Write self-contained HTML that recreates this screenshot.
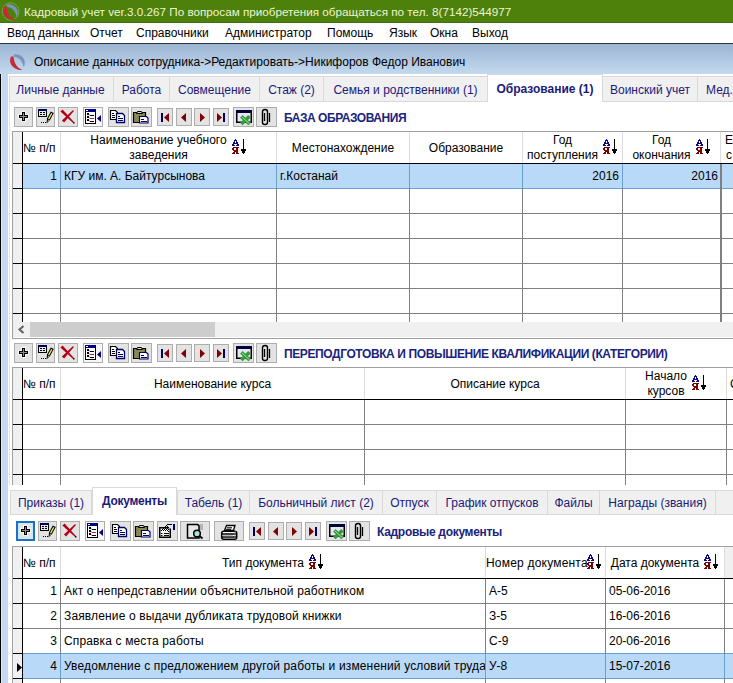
<!DOCTYPE html><html><head><meta charset="utf-8"><style>
*{margin:0;padding:0;box-sizing:border-box}
html,body{width:733px;height:683px;overflow:hidden;background:#fff}
body{position:relative;font-family:"Liberation Sans", sans-serif;font-size:12px;color:#000}
div,svg{position:absolute}
.t{white-space:nowrap;line-height:14px}
.b{background:#e3e3e3;border:1px solid #adadad;box-sizing:content-box}
.tab{position:absolute;background:#f0f0f0;border:1px solid #d9d9d9;border-bottom:none;color:#1a1a7a;text-align:center;line-height:14px;white-space:nowrap}
.tab.a{background:#fff;font-weight:bold;}
</style></head><body>
<div style="left:0px;top:0px;width:733px;height:23px;background:#4d810c"></div>
<div style="left:0px;top:22px;width:733px;height:1px;background:#45700f"></div>
<svg style="left:1px;top:2px" width="19" height="19"><ellipse cx="9.5" cy="9.5" rx="8.3" ry="8.6" fill="none" stroke="#e0ecd0" stroke-width="0.8" stroke-dasharray="1 1.2" opacity="0.8"/></svg>
<svg style="left:2px;top:3px" width="17" height="17"><path d="M2 3.5 C-1.5 10 5 18 13.5 17 C8 15 5 10 4.5 3.5 Z" fill="#c8283a"/><path d="M4.5 1.5 C12 0 18 6 15 14 C13.5 13 14 5 5 3.8 Z" fill="#7895c0"/></svg>
<div class="t" style="left:24px;top:5px;color:#eef5d0;font-size:11.7px">Кадровый учет ver.3.0.267 По вопросам приобретения обращаться по тел. 8(7142)544977</div>
<div style="left:0px;top:23px;width:733px;height:20px;background:#fff"></div>
<div class="t" style="left:7px;top:26px;font-size:12px;color:#000">Ввод данных</div>
<div class="t" style="left:90px;top:26px;font-size:12px;color:#000">Отчет</div>
<div class="t" style="left:136px;top:26px;font-size:12px;color:#000">Справочники</div>
<div class="t" style="left:225px;top:26px;font-size:12px;color:#000">Администратор</div>
<div class="t" style="left:327px;top:26px;font-size:12px;color:#000">Помощь</div>
<div class="t" style="left:389px;top:26px;font-size:12px;color:#000">Язык</div>
<div class="t" style="left:430px;top:26px;font-size:12px;color:#000">Окна</div>
<div class="t" style="left:472px;top:26px;font-size:12px;color:#000">Выход</div>
<div style="left:0px;top:43px;width:733px;height:1px;background:#2c3440"></div>
<div style="left:0px;top:44px;width:733px;height:640px;background:linear-gradient(#9cb5d2,#c3d9ef 30px,#c3d9ef)"></div>
<svg style="left:9px;top:53px" width="17" height="17"><path d="M2 3.5 C-1.5 10 5 18 13.5 17 C8 15 5 10 4.5 3.5 Z" fill="#c8283a"/><path d="M4.5 1.5 C12 0 18 6 15 14 C13.5 13 14 5 5 3.8 Z" fill="#7895c0"/></svg>
<div class="t" style="left:34px;top:55px;color:#000">Описание данных сотрудника-&gt;Редактировать-&gt;Никифоров Федор Иванович</div>
<div style="left:0px;top:74px;width:1px;height:610px;background:#000"></div>
<div style="left:1px;top:74px;width:1px;height:610px;background:#dde8f2"></div>
<div style="left:8px;top:74px;width:725px;height:610px;background:#fff"></div>
<div style="left:9px;top:101px;width:724px;height:583px;background:#fff;border-left:1px solid #e3e3e3"></div>
<div class="tab" style="left:9px;top:76px;width:105px;height:25px;padding-top:6px;padding-right:2px">Личные данные</div>
<div class="tab" style="left:113px;top:76px;width:57px;height:25px;padding-top:6px;padding-right:0px">Работа</div>
<div class="tab" style="left:169px;top:76px;width:91px;height:25px;padding-top:6px;padding-right:0px">Совмещение</div>
<div class="tab" style="left:259px;top:76px;width:65px;height:25px;padding-top:6px;padding-right:0px">Стаж (2)</div>
<div class="tab" style="left:323px;top:76px;width:165px;height:25px;padding-top:6px;padding-right:0px">Семья и родственники (1)</div>
<div class="tab" style="left:602px;top:76px;width:96px;height:25px;padding-top:6px;padding-right:0px">Воинский учет</div>
<div class="tab" style="left:697px;top:76px;width:60px;height:25px;padding-top:6px;text-align:left;padding-left:8px">Мед.карта</div>
<div class="tab a" style="left:487px;top:74px;width:116px;height:28px;padding-top:7px;border-color:#d9d9d9">Образование (1)</div>
<div style="left:9px;top:101px;width:478px;height:1px;background:#d9d9d9"></div>
<div style="left:603px;top:101px;width:130px;height:1px;background:#d9d9d9"></div>
<div class="b" style="left:14px;top:107px;width:17px;height:18px;"><svg width="19" height="20" style="left:-1px;top:-1px"><path d="M8 5h3v3h3v3h-3v3h-3v-3h-3v-3h3z" fill="#fff" stroke="#fff" stroke-width="2" opacity="0.7"/><path d="M8 5h3v3h3v3h-3v3h-3v-3h-3v-3h3z" fill="#000"/><rect x="9" y="6" width="1" height="7" fill="#8a8a8a"/><rect x="6" y="9" width="7" height="1" fill="#8a8a8a"/></svg></div>
<div class="b" style="left:36px;top:107px;width:17px;height:18px;"><svg width="19" height="20" style="left:-1px;top:-1px"><rect x="2" y="2" width="9" height="8" fill="#000"/><rect x="2" y="2" width="9" height="2" fill="#00005a"/><rect x="3" y="4" width="7" height="5" fill="#e8e8f0"/><rect x="4" y="5" width="2" height="1" fill="#000"/><rect x="7" y="5" width="2" height="1" fill="#000"/><rect x="4" y="7" width="2" height="1" fill="#000"/><rect x="7" y="7" width="2" height="1" fill="#000"/><path d="M10.5 16.5 L11 11.5 L14.8 4.5 L17.8 6 L14 13 Z" fill="#000"/><path d="M12 11.8 L15.2 6 L16.4 6.6 L13.2 12.4 Z" fill="#e8e860"/><path d="M11.6 15 L12 12.8 L13 13.3Z" fill="#e8e860"/><rect x="5" y="15" width="1" height="1" fill="#000"/><rect x="7" y="15" width="1" height="1" fill="#000"/><rect x="9" y="15" width="1" height="1" fill="#000"/></svg></div>
<div class="b" style="left:58px;top:107px;width:18px;height:18px;"><svg width="20" height="20" style="left:-1px;top:-1px"><path d="M4.6 2.4 L2.4 4.6 L15.1 15.9 L15.9 15.1 Z" fill="#b40016"/><path d="M15.9 3.9 L15.1 3.1 L3.9 13.4 L6.1 15.6 Z" fill="#b40016"/><rect x="15" y="15" width="1.5" height="1.5" fill="#300"/></svg></div>
<div class="b" style="left:83px;top:107px;width:18px;height:18px;background:#f6f6f6"><svg width="20" height="20" style="left:-1px;top:-1px"><rect x="2" y="2" width="11" height="15" fill="#000"/><rect x="3" y="5" width="9" height="11" fill="#fff"/><rect x="2" y="2" width="11" height="3" fill="#000080"/><rect x="3" y="3" width="2" height="1" fill="#fff"/><rect x="4" y="6" width="2" height="2" fill="#000"/><rect x="4" y="9" width="2" height="2" fill="#000"/><rect x="4" y="12" width="2" height="2" fill="#000"/><path d="M6 7.5l1 1h4M6 10.5l1 1h4M6 13.5l1 1h4" stroke="#000" fill="none"/><path d="M7 11.5h4" stroke="#c02040"/><path d="M18 8v7l-4-3.5z" fill="#000080"/></svg></div>
<div class="b" style="left:108px;top:107px;width:19px;height:18px;"><svg width="21" height="20" style="left:-1px;top:-1px"><path d="M2.5 3.5h5l2 2v7h-7z" fill="#fff" stroke="#000" stroke-width="1.2"/><path d="M4 6.5h2M4 8.5h3M4 10.5h3" stroke="#000"/><path d="M8.5 6.5h6l2 2v7h-8z" fill="#fff" stroke="#000060" stroke-width="1.3"/><path d="M10 9.5h2M10 11.5h5M10 13.5h5" stroke="#000060"/></svg></div>
<div class="b" style="left:131px;top:107px;width:19px;height:18px;"><svg width="21" height="20" style="left:-1px;top:-1px"><path d="M2.5 5.5h12v10h-12z" fill="#8a8a50" stroke="#000" stroke-width="1.2"/><path d="M5.5 6.5h6l-1-2h-4z" fill="#e0e0a0" stroke="#000"/><path d="M8.5 9.5h7l1.5 1.5v5h-8.5z" fill="#fff" stroke="#000060" stroke-width="1.2"/><path d="M10 12.5h3M10 14.5h6" stroke="#000060"/></svg></div>
<div class="b" style="left:157px;top:108px;width:14px;height:16px;"><svg width="16" height="18" style="left:-1px;top:-1px"><rect x="4" y="5" width="2" height="9" fill="#000060"/><path d="M12 5v9l-5-4.5z" fill="#800000"/></svg></div>
<div class="b" style="left:176px;top:108px;width:14px;height:16px;"><svg width="16" height="18" style="left:-1px;top:-1px"><path d="M10 5v9l-5-4.5z" fill="#800000"/></svg></div>
<div class="b" style="left:194px;top:108px;width:14px;height:16px;"><svg width="16" height="18" style="left:-1px;top:-1px"><path d="M6 5v9l5-4.5z" fill="#800000"/></svg></div>
<div class="b" style="left:213px;top:108px;width:14px;height:16px;"><svg width="16" height="18" style="left:-1px;top:-1px"><path d="M4 5v9l5-4.5z" fill="#800000"/><rect x="10" y="5" width="2" height="9" fill="#000060"/></svg></div>
<div class="b" style="left:233px;top:107px;width:19px;height:18px;"><svg width="21" height="20" style="left:-1px;top:-1px"><rect x="3" y="3" width="16" height="13" fill="#000"/><rect x="4.5" y="6" width="13" height="8.5" fill="#e6e6f6"/><rect x="3" y="3" width="16" height="3" fill="#00003a"/><path d="M8.3 9.3 L16.7 17" stroke="#359a3a" stroke-width="3.6"/><path d="M16.5 9.3 L8.3 17" stroke="#359a3a" stroke-width="3.6"/><path d="M8.8 9.8 L16.2 16.5" stroke="#a8eea8" stroke-width="0.9"/></svg></div>
<div class="b" style="left:256px;top:107px;width:19px;height:18px;"><svg width="21" height="20" style="left:-1px;top:-1px"><path d="M8.5 14 V6 M13.5 6 V15" stroke="#000" stroke-width="1.3" fill="none"/><path d="M6.5 5 Q6.5 2.5 9.2 2.5 Q11.5 2.5 11.5 5 V15.5 Q11.5 17.5 9 17.5 Q6.5 17.5 6.5 15.5 Z" fill="none" stroke="#000" stroke-width="1.4"/></svg></div>
<div class="t" style="left:284px;top:111px;font-weight:bold;color:#1a237e;letter-spacing:-0.45px">БАЗА ОБРАЗОВАНИЯ</div>
<div style="left:12px;top:131px;width:721px;height:191px;overflow:hidden;background:#fff">
<div style="left:0px;top:0px;width:721px;height:1px;background:#a0a0a0"></div>
<div style="left:0px;top:0px;width:1px;height:191px;background:#a0a0a0"></div>
<div style="left:1px;top:1px;width:9px;height:191px;background:#f0f0f0"></div>
<div style="left:11px;top:33px;width:710px;height:24px;background:#b9d9f9"></div>
<div style="left:11px;top:32px;width:710px;height:1px;background:#6a9fd6"></div>
<div style="left:11px;top:57px;width:710px;height:1px;background:#6a9fd6"></div>
<div style="left:1px;top:57px;width:10px;height:1px;background:#000"></div>
<div style="left:11px;top:82px;width:710px;height:1px;background:#808080"></div>
<div style="left:1px;top:82px;width:10px;height:1px;background:#000"></div>
<div style="left:11px;top:107px;width:710px;height:1px;background:#808080"></div>
<div style="left:1px;top:107px;width:10px;height:1px;background:#000"></div>
<div style="left:11px;top:132px;width:710px;height:1px;background:#808080"></div>
<div style="left:1px;top:132px;width:10px;height:1px;background:#000"></div>
<div style="left:11px;top:157px;width:710px;height:1px;background:#808080"></div>
<div style="left:1px;top:157px;width:10px;height:1px;background:#000"></div>
<div style="left:11px;top:182px;width:710px;height:1px;background:#808080"></div>
<div style="left:1px;top:182px;width:10px;height:1px;background:#000"></div>
<div style="left:1px;top:32px;width:720px;height:1px;background:#000"></div>
<div style="left:10px;top:1px;width:1px;height:191px;background:#000"></div>
<div style="left:48px;top:1px;width:1px;height:31px;background:#dcdcdc"></div>
<div style="left:48px;top:33px;width:1px;height:159px;background:#808080"></div>
<div style="left:264px;top:1px;width:1px;height:31px;background:#dcdcdc"></div>
<div style="left:264px;top:33px;width:1px;height:159px;background:#808080"></div>
<div style="left:397px;top:1px;width:1px;height:31px;background:#dcdcdc"></div>
<div style="left:397px;top:33px;width:1px;height:159px;background:#808080"></div>
<div style="left:510px;top:1px;width:1px;height:31px;background:#dcdcdc"></div>
<div style="left:510px;top:33px;width:1px;height:159px;background:#808080"></div>
<div style="left:610px;top:1px;width:1px;height:31px;background:#dcdcdc"></div>
<div style="left:610px;top:33px;width:1px;height:159px;background:#808080"></div>
<div style="left:708px;top:1px;width:1px;height:31px;background:#dcdcdc"></div>
<div style="left:708px;top:33px;width:2px;height:159px;background:#808080"></div>
<div style="left:48px;top:33px;width:1px;height:24px;background:#6a9fd6"></div>
<div style="left:264px;top:33px;width:1px;height:24px;background:#6a9fd6"></div>
<div style="left:397px;top:33px;width:1px;height:24px;background:#6a9fd6"></div>
<div style="left:510px;top:33px;width:1px;height:24px;background:#6a9fd6"></div>
<div style="left:610px;top:33px;width:1px;height:24px;background:#6a9fd6"></div>
<div style="left:708px;top:33px;width:2px;height:25px;background:#808080"></div>
<div style="left:11px;top:1px;width:37px;height:31px;display:flex;align-items:center;justify-content:center;padding-top:2px;justify-content:flex-start;padding-left:0"><div class="t" style="position:relative;text-align:center;line-height:15px">№ п/п</div></div>
<div style="left:49px;top:1px;width:215px;height:31px;display:flex;align-items:center;justify-content:center;"><div class="t" style="position:relative;text-align:center;line-height:15px">Наименование учебного<br>заведения</div><svg width="15" height="16" style="position:relative;flex:none;margin-left:5px;top:-1px" shape-rendering="crispEdges"><rect x="3" y="0" width="1" height="1" fill="#0a0a80"/><rect x="2" y="1" width="3" height="1" fill="#0a0a80"/><rect x="2" y="2" width="1" height="1" fill="#0a0a80"/><rect x="4" y="2" width="1" height="1" fill="#0a0a80"/><rect x="1" y="3" width="2" height="1" fill="#0a0a80"/><rect x="4" y="3" width="2" height="1" fill="#0a0a80"/><rect x="1" y="4" width="5" height="1" fill="#0a0a80"/><rect x="0" y="5" width="2" height="1" fill="#0a0a80"/><rect x="5" y="5" width="2" height="1" fill="#0a0a80"/><rect x="0" y="6" width="3" height="1" fill="#0a0a80"/><rect x="4" y="6" width="3" height="1" fill="#0a0a80"/><rect x="1" y="8" width="6" height="1" fill="#7a0000"/><rect x="0" y="9" width="2" height="1" fill="#7a0000"/><rect x="4" y="9" width="2" height="1" fill="#7a0000"/><rect x="0" y="10" width="2" height="1" fill="#7a0000"/><rect x="4" y="10" width="2" height="1" fill="#7a0000"/><rect x="1" y="11" width="5" height="1" fill="#7a0000"/><rect x="2" y="12" width="4" height="1" fill="#7a0000"/><rect x="1" y="13" width="2" height="1" fill="#7a0000"/><rect x="4" y="13" width="2" height="1" fill="#7a0000"/><rect x="0" y="14" width="3" height="1" fill="#7a0000"/><rect x="4" y="14" width="3" height="1" fill="#7a0000"/><rect x="11" y="0" width="1" height="15" fill="#000"/><rect x="9" y="10" width="5" height="2" fill="#000"/><rect x="10" y="12" width="3" height="2" fill="#000"/></svg></div>
<div style="left:265px;top:1px;width:132px;height:31px;display:flex;align-items:center;justify-content:center;padding-top:2px;"><div class="t" style="position:relative;text-align:center;line-height:15px">Местонахождение</div></div>
<div style="left:398px;top:1px;width:112px;height:31px;display:flex;align-items:center;justify-content:center;padding-top:2px;"><div class="t" style="position:relative;text-align:center;line-height:15px">Образование</div></div>
<div style="left:511px;top:1px;width:99px;height:31px;display:flex;align-items:center;justify-content:center;"><div class="t" style="position:relative;text-align:center;line-height:15px">Год<br>поступления</div><svg width="15" height="16" style="position:relative;flex:none;margin-left:5px;top:-1px" shape-rendering="crispEdges"><rect x="3" y="0" width="1" height="1" fill="#0a0a80"/><rect x="2" y="1" width="3" height="1" fill="#0a0a80"/><rect x="2" y="2" width="1" height="1" fill="#0a0a80"/><rect x="4" y="2" width="1" height="1" fill="#0a0a80"/><rect x="1" y="3" width="2" height="1" fill="#0a0a80"/><rect x="4" y="3" width="2" height="1" fill="#0a0a80"/><rect x="1" y="4" width="5" height="1" fill="#0a0a80"/><rect x="0" y="5" width="2" height="1" fill="#0a0a80"/><rect x="5" y="5" width="2" height="1" fill="#0a0a80"/><rect x="0" y="6" width="3" height="1" fill="#0a0a80"/><rect x="4" y="6" width="3" height="1" fill="#0a0a80"/><rect x="1" y="8" width="6" height="1" fill="#7a0000"/><rect x="0" y="9" width="2" height="1" fill="#7a0000"/><rect x="4" y="9" width="2" height="1" fill="#7a0000"/><rect x="0" y="10" width="2" height="1" fill="#7a0000"/><rect x="4" y="10" width="2" height="1" fill="#7a0000"/><rect x="1" y="11" width="5" height="1" fill="#7a0000"/><rect x="2" y="12" width="4" height="1" fill="#7a0000"/><rect x="1" y="13" width="2" height="1" fill="#7a0000"/><rect x="4" y="13" width="2" height="1" fill="#7a0000"/><rect x="0" y="14" width="3" height="1" fill="#7a0000"/><rect x="4" y="14" width="3" height="1" fill="#7a0000"/><rect x="11" y="0" width="1" height="15" fill="#000"/><rect x="9" y="10" width="5" height="2" fill="#000"/><rect x="10" y="12" width="3" height="2" fill="#000"/></svg></div>
<div style="left:611px;top:1px;width:97px;height:31px;display:flex;align-items:center;justify-content:center;"><div class="t" style="position:relative;text-align:center;line-height:15px">Год<br>окончания</div><svg width="15" height="16" style="position:relative;flex:none;margin-left:5px;top:-1px" shape-rendering="crispEdges"><rect x="3" y="0" width="1" height="1" fill="#0a0a80"/><rect x="2" y="1" width="3" height="1" fill="#0a0a80"/><rect x="2" y="2" width="1" height="1" fill="#0a0a80"/><rect x="4" y="2" width="1" height="1" fill="#0a0a80"/><rect x="1" y="3" width="2" height="1" fill="#0a0a80"/><rect x="4" y="3" width="2" height="1" fill="#0a0a80"/><rect x="1" y="4" width="5" height="1" fill="#0a0a80"/><rect x="0" y="5" width="2" height="1" fill="#0a0a80"/><rect x="5" y="5" width="2" height="1" fill="#0a0a80"/><rect x="0" y="6" width="3" height="1" fill="#0a0a80"/><rect x="4" y="6" width="3" height="1" fill="#0a0a80"/><rect x="1" y="8" width="6" height="1" fill="#7a0000"/><rect x="0" y="9" width="2" height="1" fill="#7a0000"/><rect x="4" y="9" width="2" height="1" fill="#7a0000"/><rect x="0" y="10" width="2" height="1" fill="#7a0000"/><rect x="4" y="10" width="2" height="1" fill="#7a0000"/><rect x="1" y="11" width="5" height="1" fill="#7a0000"/><rect x="2" y="12" width="4" height="1" fill="#7a0000"/><rect x="1" y="13" width="2" height="1" fill="#7a0000"/><rect x="4" y="13" width="2" height="1" fill="#7a0000"/><rect x="0" y="14" width="3" height="1" fill="#7a0000"/><rect x="4" y="14" width="3" height="1" fill="#7a0000"/><rect x="11" y="0" width="1" height="15" fill="#000"/><rect x="9" y="10" width="5" height="2" fill="#000"/><rect x="10" y="12" width="3" height="2" fill="#000"/></svg></div>
<div style="left:710px;top:1px;width:38px;height:31px;display:flex;align-items:center;justify-content:center;justify-content:flex-start;padding-left:3px"><div class="t" style="position:relative;text-align:center;line-height:15px">Е<br>с</div></div>
<div class="t" style="left:11px;top:38px;width:34px;text-align:right;overflow:hidden;">1</div>
<div class="t" style="left:49px;top:38px;width:215px;text-align:left;overflow:hidden;padding-left:3px">КГУ им. А. Байтурсынова</div>
<div class="t" style="left:265px;top:38px;width:132px;text-align:left;overflow:hidden;padding-left:3px">г.Костанай</div>
<div class="t" style="left:511px;top:38px;width:97px;text-align:right;overflow:hidden;padding-right:1px">2016</div>
<div class="t" style="left:611px;top:38px;width:97px;text-align:right;overflow:hidden;padding-right:2px">2016</div>
</div>
<div style="left:12px;top:322px;width:721px;height:16px;background:#f0f0f0;border-left:1px solid #a0a0a0"></div>
<div style="left:13px;top:337px;width:720px;height:1px;background:#fff"></div>
<svg style="left:12px;top:321px" width="18" height="17"><path d="M11.5 5 L7.5 8.5 L11.5 12" fill="none" stroke="#606060" stroke-width="2"/></svg>
<div style="left:30px;top:322px;width:185px;height:15px;background:#cdcdcd"></div>
<div style="left:12px;top:338px;width:721px;height:1px;background:#a0a0a0"></div>
<div class="b" style="left:14px;top:343px;width:17px;height:18px;"><svg width="19" height="20" style="left:-1px;top:-1px"><path d="M8 5h3v3h3v3h-3v3h-3v-3h-3v-3h3z" fill="#fff" stroke="#fff" stroke-width="2" opacity="0.7"/><path d="M8 5h3v3h3v3h-3v3h-3v-3h-3v-3h3z" fill="#000"/><rect x="9" y="6" width="1" height="7" fill="#8a8a8a"/><rect x="6" y="9" width="7" height="1" fill="#8a8a8a"/></svg></div>
<div class="b" style="left:36px;top:343px;width:17px;height:18px;"><svg width="19" height="20" style="left:-1px;top:-1px"><rect x="2" y="2" width="9" height="8" fill="#000"/><rect x="2" y="2" width="9" height="2" fill="#00005a"/><rect x="3" y="4" width="7" height="5" fill="#e8e8f0"/><rect x="4" y="5" width="2" height="1" fill="#000"/><rect x="7" y="5" width="2" height="1" fill="#000"/><rect x="4" y="7" width="2" height="1" fill="#000"/><rect x="7" y="7" width="2" height="1" fill="#000"/><path d="M10.5 16.5 L11 11.5 L14.8 4.5 L17.8 6 L14 13 Z" fill="#000"/><path d="M12 11.8 L15.2 6 L16.4 6.6 L13.2 12.4 Z" fill="#e8e860"/><path d="M11.6 15 L12 12.8 L13 13.3Z" fill="#e8e860"/><rect x="5" y="15" width="1" height="1" fill="#000"/><rect x="7" y="15" width="1" height="1" fill="#000"/><rect x="9" y="15" width="1" height="1" fill="#000"/></svg></div>
<div class="b" style="left:58px;top:343px;width:18px;height:18px;"><svg width="20" height="20" style="left:-1px;top:-1px"><path d="M4.6 2.4 L2.4 4.6 L15.1 15.9 L15.9 15.1 Z" fill="#b40016"/><path d="M15.9 3.9 L15.1 3.1 L3.9 13.4 L6.1 15.6 Z" fill="#b40016"/><rect x="15" y="15" width="1.5" height="1.5" fill="#300"/></svg></div>
<div class="b" style="left:83px;top:343px;width:18px;height:18px;background:#f6f6f6"><svg width="20" height="20" style="left:-1px;top:-1px"><rect x="2" y="2" width="11" height="15" fill="#000"/><rect x="3" y="5" width="9" height="11" fill="#fff"/><rect x="2" y="2" width="11" height="3" fill="#000080"/><rect x="3" y="3" width="2" height="1" fill="#fff"/><rect x="4" y="6" width="2" height="2" fill="#000"/><rect x="4" y="9" width="2" height="2" fill="#000"/><rect x="4" y="12" width="2" height="2" fill="#000"/><path d="M6 7.5l1 1h4M6 10.5l1 1h4M6 13.5l1 1h4" stroke="#000" fill="none"/><path d="M7 11.5h4" stroke="#c02040"/><path d="M18 8v7l-4-3.5z" fill="#000080"/></svg></div>
<div class="b" style="left:108px;top:343px;width:19px;height:18px;"><svg width="21" height="20" style="left:-1px;top:-1px"><path d="M2.5 3.5h5l2 2v7h-7z" fill="#fff" stroke="#000" stroke-width="1.2"/><path d="M4 6.5h2M4 8.5h3M4 10.5h3" stroke="#000"/><path d="M8.5 6.5h6l2 2v7h-8z" fill="#fff" stroke="#000060" stroke-width="1.3"/><path d="M10 9.5h2M10 11.5h5M10 13.5h5" stroke="#000060"/></svg></div>
<div class="b" style="left:131px;top:343px;width:19px;height:18px;"><svg width="21" height="20" style="left:-1px;top:-1px"><path d="M2.5 5.5h12v10h-12z" fill="#8a8a50" stroke="#000" stroke-width="1.2"/><path d="M5.5 6.5h6l-1-2h-4z" fill="#e0e0a0" stroke="#000"/><path d="M8.5 9.5h7l1.5 1.5v5h-8.5z" fill="#fff" stroke="#000060" stroke-width="1.2"/><path d="M10 12.5h3M10 14.5h6" stroke="#000060"/></svg></div>
<div class="b" style="left:157px;top:344px;width:14px;height:16px;"><svg width="16" height="18" style="left:-1px;top:-1px"><rect x="4" y="5" width="2" height="9" fill="#000060"/><path d="M12 5v9l-5-4.5z" fill="#800000"/></svg></div>
<div class="b" style="left:176px;top:344px;width:14px;height:16px;"><svg width="16" height="18" style="left:-1px;top:-1px"><path d="M10 5v9l-5-4.5z" fill="#800000"/></svg></div>
<div class="b" style="left:194px;top:344px;width:14px;height:16px;"><svg width="16" height="18" style="left:-1px;top:-1px"><path d="M6 5v9l5-4.5z" fill="#800000"/></svg></div>
<div class="b" style="left:213px;top:344px;width:14px;height:16px;"><svg width="16" height="18" style="left:-1px;top:-1px"><path d="M4 5v9l5-4.5z" fill="#800000"/><rect x="10" y="5" width="2" height="9" fill="#000060"/></svg></div>
<div class="b" style="left:233px;top:343px;width:19px;height:18px;"><svg width="21" height="20" style="left:-1px;top:-1px"><rect x="3" y="3" width="16" height="13" fill="#000"/><rect x="4.5" y="6" width="13" height="8.5" fill="#e6e6f6"/><rect x="3" y="3" width="16" height="3" fill="#00003a"/><path d="M8.3 9.3 L16.7 17" stroke="#359a3a" stroke-width="3.6"/><path d="M16.5 9.3 L8.3 17" stroke="#359a3a" stroke-width="3.6"/><path d="M8.8 9.8 L16.2 16.5" stroke="#a8eea8" stroke-width="0.9"/></svg></div>
<div class="b" style="left:256px;top:343px;width:19px;height:18px;"><svg width="21" height="20" style="left:-1px;top:-1px"><path d="M8.5 14 V6 M13.5 6 V15" stroke="#000" stroke-width="1.3" fill="none"/><path d="M6.5 5 Q6.5 2.5 9.2 2.5 Q11.5 2.5 11.5 5 V15.5 Q11.5 17.5 9 17.5 Q6.5 17.5 6.5 15.5 Z" fill="none" stroke="#000" stroke-width="1.4"/></svg></div>
<div class="t" style="left:284px;top:347px;font-weight:bold;color:#1a237e;letter-spacing:-0.4px">ПЕРЕПОДГОТОВКА И ПОВЫШЕНИЕ КВАЛИФИКАЦИИ (КАТЕГОРИИ)</div>
<div style="left:12px;top:367px;width:721px;height:118px;overflow:hidden;background:#fff">
<div style="left:0px;top:0px;width:721px;height:1px;background:#a0a0a0"></div>
<div style="left:0px;top:0px;width:1px;height:118px;background:#a0a0a0"></div>
<div style="left:1px;top:1px;width:9px;height:118px;background:#f0f0f0"></div>
<div style="left:11px;top:57px;width:710px;height:1px;background:#808080"></div>
<div style="left:1px;top:57px;width:10px;height:1px;background:#000"></div>
<div style="left:11px;top:82px;width:710px;height:1px;background:#808080"></div>
<div style="left:1px;top:82px;width:10px;height:1px;background:#000"></div>
<div style="left:11px;top:107px;width:710px;height:1px;background:#808080"></div>
<div style="left:1px;top:107px;width:10px;height:1px;background:#000"></div>
<div style="left:11px;top:132px;width:710px;height:1px;background:#808080"></div>
<div style="left:1px;top:132px;width:10px;height:1px;background:#000"></div>
<div style="left:1px;top:32px;width:720px;height:1px;background:#000"></div>
<div style="left:10px;top:1px;width:1px;height:118px;background:#000"></div>
<div style="left:48px;top:1px;width:1px;height:31px;background:#dcdcdc"></div>
<div style="left:48px;top:33px;width:1px;height:86px;background:#808080"></div>
<div style="left:352px;top:1px;width:1px;height:31px;background:#dcdcdc"></div>
<div style="left:352px;top:33px;width:1px;height:86px;background:#808080"></div>
<div style="left:613px;top:1px;width:1px;height:31px;background:#dcdcdc"></div>
<div style="left:613px;top:33px;width:1px;height:86px;background:#808080"></div>
<div style="left:714px;top:1px;width:1px;height:31px;background:#dcdcdc"></div>
<div style="left:714px;top:33px;width:1px;height:86px;background:#808080"></div>
<div style="left:11px;top:1px;width:37px;height:31px;display:flex;align-items:center;justify-content:center;padding-top:2px;justify-content:flex-start"><div class="t" style="position:relative;text-align:center;line-height:15px">№ п/п</div></div>
<div style="left:49px;top:1px;width:303px;height:31px;display:flex;align-items:center;justify-content:center;padding-top:2px;"><div class="t" style="position:relative;text-align:center;line-height:15px">Наименование курса</div></div>
<div style="left:353px;top:1px;width:260px;height:31px;display:flex;align-items:center;justify-content:center;padding-top:2px;"><div class="t" style="position:relative;text-align:center;line-height:15px">Описание курса</div></div>
<div style="left:614px;top:1px;width:100px;height:31px;display:flex;align-items:center;justify-content:center;"><div class="t" style="position:relative;text-align:center;line-height:15px">Начало<br>курсов</div><svg width="15" height="16" style="position:relative;flex:none;margin-left:5px;top:-1px" shape-rendering="crispEdges"><rect x="3" y="0" width="1" height="1" fill="#0a0a80"/><rect x="2" y="1" width="3" height="1" fill="#0a0a80"/><rect x="2" y="2" width="1" height="1" fill="#0a0a80"/><rect x="4" y="2" width="1" height="1" fill="#0a0a80"/><rect x="1" y="3" width="2" height="1" fill="#0a0a80"/><rect x="4" y="3" width="2" height="1" fill="#0a0a80"/><rect x="1" y="4" width="5" height="1" fill="#0a0a80"/><rect x="0" y="5" width="2" height="1" fill="#0a0a80"/><rect x="5" y="5" width="2" height="1" fill="#0a0a80"/><rect x="0" y="6" width="3" height="1" fill="#0a0a80"/><rect x="4" y="6" width="3" height="1" fill="#0a0a80"/><rect x="1" y="8" width="6" height="1" fill="#7a0000"/><rect x="0" y="9" width="2" height="1" fill="#7a0000"/><rect x="4" y="9" width="2" height="1" fill="#7a0000"/><rect x="0" y="10" width="2" height="1" fill="#7a0000"/><rect x="4" y="10" width="2" height="1" fill="#7a0000"/><rect x="1" y="11" width="5" height="1" fill="#7a0000"/><rect x="2" y="12" width="4" height="1" fill="#7a0000"/><rect x="1" y="13" width="2" height="1" fill="#7a0000"/><rect x="4" y="13" width="2" height="1" fill="#7a0000"/><rect x="0" y="14" width="3" height="1" fill="#7a0000"/><rect x="4" y="14" width="3" height="1" fill="#7a0000"/><rect x="11" y="0" width="1" height="15" fill="#000"/><rect x="9" y="10" width="5" height="2" fill="#000"/><rect x="10" y="12" width="3" height="2" fill="#000"/></svg></div>
<div style="left:715px;top:1px;width:33px;height:31px;display:flex;align-items:center;justify-content:center;padding-top:2px;justify-content:flex-start;padding-left:3px"><div class="t" style="position:relative;text-align:center;line-height:15px">С</div></div>
</div>
<div style="left:8px;top:485px;width:725px;height:198px;background:#fff"></div>
<div class="tab" style="left:10px;top:490px;width:82px;height:25px;padding-top:5px">Приказы (1)</div>
<div class="tab" style="left:177px;top:490px;width:73px;height:25px;padding-top:5px">Табель (1)</div>
<div class="tab" style="left:249px;top:490px;width:134px;height:25px;padding-top:5px">Больничный лист (2)</div>
<div class="tab" style="left:382px;top:490px;width:55px;height:25px;padding-top:5px">Отпуск</div>
<div class="tab" style="left:436px;top:490px;width:112px;height:25px;padding-top:5px">График отпусков</div>
<div class="tab" style="left:547px;top:490px;width:53px;height:25px;padding-top:5px">Файлы</div>
<div class="tab" style="left:599px;top:490px;width:117px;height:25px;padding-top:5px">Награды (звания)</div>
<div class="tab" style="left:715px;top:490px;width:46px;height:25px;padding-top:5px"></div>
<div class="tab a" style="left:92px;top:487px;width:85px;height:28px;padding-top:6px;letter-spacing:-0.3px">Документы</div>
<div style="left:10px;top:514px;width:82px;height:1px;background:#d9d9d9"></div>
<div style="left:177px;top:514px;width:556px;height:1px;background:#d9d9d9"></div>
<div class="b" style="left:16px;top:521px;width:17px;height:18px;"><svg width="19" height="20" style="left:-1px;top:-1px"><path d="M8 5h3v3h3v3h-3v3h-3v-3h-3v-3h3z" fill="#fff" stroke="#fff" stroke-width="2" opacity="0.7"/><path d="M8 5h3v3h3v3h-3v3h-3v-3h-3v-3h3z" fill="#000"/><rect x="9" y="6" width="1" height="7" fill="#8a8a8a"/><rect x="6" y="9" width="7" height="1" fill="#8a8a8a"/></svg></div>
<div class="b" style="left:38px;top:521px;width:17px;height:18px;"><svg width="19" height="20" style="left:-1px;top:-1px"><rect x="2" y="2" width="9" height="8" fill="#000"/><rect x="2" y="2" width="9" height="2" fill="#00005a"/><rect x="3" y="4" width="7" height="5" fill="#e8e8f0"/><rect x="4" y="5" width="2" height="1" fill="#000"/><rect x="7" y="5" width="2" height="1" fill="#000"/><rect x="4" y="7" width="2" height="1" fill="#000"/><rect x="7" y="7" width="2" height="1" fill="#000"/><path d="M10.5 16.5 L11 11.5 L14.8 4.5 L17.8 6 L14 13 Z" fill="#000"/><path d="M12 11.8 L15.2 6 L16.4 6.6 L13.2 12.4 Z" fill="#e8e860"/><path d="M11.6 15 L12 12.8 L13 13.3Z" fill="#e8e860"/><rect x="5" y="15" width="1" height="1" fill="#000"/><rect x="7" y="15" width="1" height="1" fill="#000"/><rect x="9" y="15" width="1" height="1" fill="#000"/></svg></div>
<div class="b" style="left:60px;top:521px;width:18px;height:18px;"><svg width="20" height="20" style="left:-1px;top:-1px"><path d="M4.6 2.4 L2.4 4.6 L15.1 15.9 L15.9 15.1 Z" fill="#b40016"/><path d="M15.9 3.9 L15.1 3.1 L3.9 13.4 L6.1 15.6 Z" fill="#b40016"/><rect x="15" y="15" width="1.5" height="1.5" fill="#300"/></svg></div>
<div class="b" style="left:85px;top:521px;width:18px;height:18px;background:#f6f6f6"><svg width="20" height="20" style="left:-1px;top:-1px"><rect x="2" y="2" width="11" height="15" fill="#000"/><rect x="3" y="5" width="9" height="11" fill="#fff"/><rect x="2" y="2" width="11" height="3" fill="#000080"/><rect x="3" y="3" width="2" height="1" fill="#fff"/><rect x="4" y="6" width="2" height="2" fill="#000"/><rect x="4" y="9" width="2" height="2" fill="#000"/><rect x="4" y="12" width="2" height="2" fill="#000"/><path d="M6 7.5l1 1h4M6 10.5l1 1h4M6 13.5l1 1h4" stroke="#000" fill="none"/><path d="M7 11.5h4" stroke="#c02040"/><path d="M18 8v7l-4-3.5z" fill="#000080"/></svg></div>
<div class="b" style="left:110px;top:521px;width:19px;height:18px;"><svg width="21" height="20" style="left:-1px;top:-1px"><path d="M2.5 3.5h5l2 2v7h-7z" fill="#fff" stroke="#000" stroke-width="1.2"/><path d="M4 6.5h2M4 8.5h3M4 10.5h3" stroke="#000"/><path d="M8.5 6.5h6l2 2v7h-8z" fill="#fff" stroke="#000060" stroke-width="1.3"/><path d="M10 9.5h2M10 11.5h5M10 13.5h5" stroke="#000060"/></svg></div>
<div class="b" style="left:133px;top:521px;width:19px;height:18px;"><svg width="21" height="20" style="left:-1px;top:-1px"><path d="M2.5 5.5h12v10h-12z" fill="#8a8a50" stroke="#000" stroke-width="1.2"/><path d="M5.5 6.5h6l-1-2h-4z" fill="#e0e0a0" stroke="#000"/><path d="M8.5 9.5h7l1.5 1.5v5h-8.5z" fill="#fff" stroke="#000060" stroke-width="1.2"/><path d="M10 12.5h3M10 14.5h6" stroke="#000060"/></svg></div>
<div class="b" style="left:157px;top:521px;width:19px;height:18px;"><svg width="21" height="20" style="left:-1px;top:-1px"><rect x="2.75" y="6.75" width="10.5" height="9.5" fill="#f4f4f4" stroke="#000" stroke-width="1.5"/><path d="M4 12.5h1.5M7 12.5h5M4 14.5h1.5M7 14.5h5" stroke="#000"/><g fill="#000"><rect x="4" y="9" width="1" height="1"/><rect x="5" y="8" width="1" height="1"/><rect x="6" y="7" width="1" height="1"/><rect x="7" y="6" width="1" height="1"/><rect x="8" y="5" width="1" height="1"/><rect x="9" y="4" width="1" height="1"/><rect x="6" y="9" width="1" height="1"/><rect x="7" y="8" width="1" height="1"/><rect x="8" y="7" width="1" height="1"/><rect x="9" y="6" width="1" height="1"/><rect x="10" y="5" width="1" height="1"/><rect x="8" y="9" width="1" height="1"/><rect x="9" y="8" width="1" height="1"/><rect x="10" y="7" width="1" height="1"/><rect x="11" y="8" width="1" height="1"/><rect x="10" y="9" width="1" height="1"/><rect x="11" y="10" width="1" height="1"/></g><path d="M10 3.5h5" stroke="#000"/><rect x="12" y="4" width="4" height="3.5" fill="#e4e4f4"/><rect x="16" y="3" width="2" height="6" fill="#000060"/></svg></div>
<div class="b" style="left:180px;top:521px;width:28px;height:18px;"><svg width="30" height="20" style="left:-1px;top:-1px"><rect x="18" y="3" width="5" height="6" fill="#b4b4b4"/><path d="M7.5 3.5h10l1.5 1.5v12h-11.5z" fill="#e8e8e8" stroke="#000" stroke-width="1.5"/><circle cx="17" cy="12.5" r="3.3" fill="#a8e4d8" stroke="#000" stroke-width="1.5"/><path d="M19.5 15 L22.5 17.5" stroke="#000" stroke-width="2"/></svg></div>
<div class="b" style="left:214px;top:521px;width:28px;height:18px;"><svg width="30" height="20" style="left:-1px;top:-1px"><path d="M12.5 4.5 H21 L19.5 9.5 H10.5 Z" fill="#fff" stroke="#000" stroke-width="1.3"/><path d="M13 6.8h5M12 8.3h5" stroke="#000" stroke-width="1"/><rect x="7.7" y="10.2" width="15" height="8" rx="2" fill="#fff" stroke="#000" stroke-width="1.5"/><path d="M8 13h14.5M8 16h14.5" stroke="#000" stroke-width="1.3"/><rect x="9" y="14" width="10" height="1.2" fill="#bbb"/><path d="M21 10.5v7" stroke="#777" stroke-width="1.5" stroke-dasharray="1 1"/></svg></div>
<div class="b" style="left:249px;top:522px;width:14px;height:16px;"><svg width="16" height="18" style="left:-1px;top:-1px"><rect x="4" y="5" width="2" height="9" fill="#000060"/><path d="M12 5v9l-5-4.5z" fill="#800000"/></svg></div>
<div class="b" style="left:268px;top:522px;width:14px;height:16px;"><svg width="16" height="18" style="left:-1px;top:-1px"><path d="M10 5v9l-5-4.5z" fill="#800000"/></svg></div>
<div class="b" style="left:286px;top:522px;width:14px;height:16px;"><svg width="16" height="18" style="left:-1px;top:-1px"><path d="M6 5v9l5-4.5z" fill="#800000"/></svg></div>
<div class="b" style="left:305px;top:522px;width:14px;height:16px;"><svg width="16" height="18" style="left:-1px;top:-1px"><path d="M4 5v9l5-4.5z" fill="#800000"/><rect x="10" y="5" width="2" height="9" fill="#000060"/></svg></div>
<div class="b" style="left:326px;top:521px;width:19px;height:18px;"><svg width="21" height="20" style="left:-1px;top:-1px"><rect x="3" y="3" width="16" height="13" fill="#000"/><rect x="4.5" y="6" width="13" height="8.5" fill="#e6e6f6"/><rect x="3" y="3" width="16" height="3" fill="#00003a"/><path d="M8.3 9.3 L16.7 17" stroke="#359a3a" stroke-width="3.6"/><path d="M16.5 9.3 L8.3 17" stroke="#359a3a" stroke-width="3.6"/><path d="M8.8 9.8 L16.2 16.5" stroke="#a8eea8" stroke-width="0.9"/></svg></div>
<div class="b" style="left:349px;top:521px;width:19px;height:18px;"><svg width="21" height="20" style="left:-1px;top:-1px"><path d="M8.5 14 V6 M13.5 6 V15" stroke="#000" stroke-width="1.3" fill="none"/><path d="M6.5 5 Q6.5 2.5 9.2 2.5 Q11.5 2.5 11.5 5 V15.5 Q11.5 17.5 9 17.5 Q6.5 17.5 6.5 15.5 Z" fill="none" stroke="#000" stroke-width="1.4"/></svg></div>
<div style="left:16px;top:521px;width:19px;height:20px;border:2px solid #1a72c0;"></div><div style="left:18px;top:523px;width:15px;height:16px;border:1px solid #cfe8fc;"></div>
<div class="t" style="left:377px;top:525px;font-weight:bold;color:#1a237e;letter-spacing:-0.3px">Кадровые документы</div>
<div style="left:12px;top:546px;width:721px;height:137px;overflow:hidden;background:#fff">
<div style="left:0px;top:0px;width:721px;height:1px;background:#a0a0a0"></div>
<div style="left:0px;top:0px;width:1px;height:137px;background:#a0a0a0"></div>
<div style="left:1px;top:1px;width:9px;height:137px;background:#f0f0f0"></div>
<div style="left:713px;top:1px;width:8px;height:31px;background:#f0f0f0"></div>
<div style="left:11px;top:57px;width:710px;height:1px;background:#808080"></div>
<div style="left:1px;top:57px;width:10px;height:1px;background:#000"></div>
<div style="left:11px;top:82px;width:710px;height:1px;background:#808080"></div>
<div style="left:1px;top:82px;width:10px;height:1px;background:#000"></div>
<div style="left:11px;top:107px;width:710px;height:1px;background:#808080"></div>
<div style="left:1px;top:107px;width:10px;height:1px;background:#000"></div>
<div style="left:11px;top:108px;width:710px;height:24px;background:#b9d9f9"></div>
<div style="left:11px;top:107px;width:710px;height:1px;background:#6a9fd6"></div>
<div style="left:11px;top:132px;width:710px;height:1px;background:#6a9fd6"></div>
<div style="left:1px;top:132px;width:10px;height:1px;background:#000"></div>
<div style="left:11px;top:157px;width:710px;height:1px;background:#808080"></div>
<div style="left:1px;top:157px;width:10px;height:1px;background:#000"></div>
<div style="left:1px;top:32px;width:720px;height:1px;background:#000"></div>
<div style="left:10px;top:1px;width:1px;height:137px;background:#000"></div>
<div style="left:48px;top:1px;width:1px;height:31px;background:#dcdcdc"></div>
<div style="left:48px;top:33px;width:1px;height:105px;background:#808080"></div>
<div style="left:473px;top:1px;width:1px;height:31px;background:#dcdcdc"></div>
<div style="left:473px;top:33px;width:1px;height:105px;background:#808080"></div>
<div style="left:593px;top:1px;width:1px;height:31px;background:#dcdcdc"></div>
<div style="left:593px;top:33px;width:1px;height:105px;background:#808080"></div>
<div style="left:712px;top:1px;width:1px;height:31px;background:#dcdcdc"></div>
<div style="left:712px;top:33px;width:1px;height:105px;background:#808080"></div>
<div style="left:48px;top:108px;width:1px;height:24px;background:#6a9fd6"></div>
<div style="left:473px;top:108px;width:1px;height:24px;background:#6a9fd6"></div>
<div style="left:593px;top:108px;width:1px;height:24px;background:#6a9fd6"></div>
<div style="left:712px;top:108px;width:1px;height:24px;background:#6a9fd6"></div>
<svg style="left:5px;top:117px" width="6" height="9"><path d="M0 0v9l5-4.5z" fill="#000"/></svg>
<div style="left:11px;top:1px;width:37px;height:31px;display:flex;align-items:center;justify-content:center;padding-top:2px;justify-content:flex-start"><div class="t" style="position:relative;text-align:center;line-height:15px">№ п/п</div></div>
<div style="left:49px;top:1px;width:424px;height:31px;display:flex;align-items:center;justify-content:center;padding-top:2px;"><div class="t" style="position:relative;text-align:center;line-height:15px">Тип документа</div><svg width="15" height="16" style="position:relative;flex:none;margin-left:5px;top:-2px" shape-rendering="crispEdges"><rect x="3" y="0" width="1" height="1" fill="#0a0a80"/><rect x="2" y="1" width="3" height="1" fill="#0a0a80"/><rect x="2" y="2" width="1" height="1" fill="#0a0a80"/><rect x="4" y="2" width="1" height="1" fill="#0a0a80"/><rect x="1" y="3" width="2" height="1" fill="#0a0a80"/><rect x="4" y="3" width="2" height="1" fill="#0a0a80"/><rect x="1" y="4" width="5" height="1" fill="#0a0a80"/><rect x="0" y="5" width="2" height="1" fill="#0a0a80"/><rect x="5" y="5" width="2" height="1" fill="#0a0a80"/><rect x="0" y="6" width="3" height="1" fill="#0a0a80"/><rect x="4" y="6" width="3" height="1" fill="#0a0a80"/><rect x="1" y="8" width="6" height="1" fill="#7a0000"/><rect x="0" y="9" width="2" height="1" fill="#7a0000"/><rect x="4" y="9" width="2" height="1" fill="#7a0000"/><rect x="0" y="10" width="2" height="1" fill="#7a0000"/><rect x="4" y="10" width="2" height="1" fill="#7a0000"/><rect x="1" y="11" width="5" height="1" fill="#7a0000"/><rect x="2" y="12" width="4" height="1" fill="#7a0000"/><rect x="1" y="13" width="2" height="1" fill="#7a0000"/><rect x="4" y="13" width="2" height="1" fill="#7a0000"/><rect x="0" y="14" width="3" height="1" fill="#7a0000"/><rect x="4" y="14" width="3" height="1" fill="#7a0000"/><rect x="11" y="0" width="1" height="15" fill="#000"/><rect x="9" y="10" width="5" height="2" fill="#000"/><rect x="10" y="12" width="3" height="2" fill="#000"/></svg></div>
<div style="left:474px;top:1px;width:119px;height:31px;display:flex;align-items:center;justify-content:center;padding-top:2px;justify-content:flex-start;padding-left:0px"><div class="t" style="position:relative;text-align:center;line-height:15px"><span style="letter-spacing:0.2px">Номер документа</span></div><svg width="15" height="16" style="position:relative;flex:none;margin-left:-1px;top:-2px" shape-rendering="crispEdges"><rect x="3" y="0" width="1" height="1" fill="#0a0a80"/><rect x="2" y="1" width="3" height="1" fill="#0a0a80"/><rect x="2" y="2" width="1" height="1" fill="#0a0a80"/><rect x="4" y="2" width="1" height="1" fill="#0a0a80"/><rect x="1" y="3" width="2" height="1" fill="#0a0a80"/><rect x="4" y="3" width="2" height="1" fill="#0a0a80"/><rect x="1" y="4" width="5" height="1" fill="#0a0a80"/><rect x="0" y="5" width="2" height="1" fill="#0a0a80"/><rect x="5" y="5" width="2" height="1" fill="#0a0a80"/><rect x="0" y="6" width="3" height="1" fill="#0a0a80"/><rect x="4" y="6" width="3" height="1" fill="#0a0a80"/><rect x="1" y="8" width="6" height="1" fill="#7a0000"/><rect x="0" y="9" width="2" height="1" fill="#7a0000"/><rect x="4" y="9" width="2" height="1" fill="#7a0000"/><rect x="0" y="10" width="2" height="1" fill="#7a0000"/><rect x="4" y="10" width="2" height="1" fill="#7a0000"/><rect x="1" y="11" width="5" height="1" fill="#7a0000"/><rect x="2" y="12" width="4" height="1" fill="#7a0000"/><rect x="1" y="13" width="2" height="1" fill="#7a0000"/><rect x="4" y="13" width="2" height="1" fill="#7a0000"/><rect x="0" y="14" width="3" height="1" fill="#7a0000"/><rect x="4" y="14" width="3" height="1" fill="#7a0000"/><rect x="11" y="0" width="1" height="15" fill="#000"/><rect x="9" y="10" width="5" height="2" fill="#000"/><rect x="10" y="12" width="3" height="2" fill="#000"/></svg></div>
<div style="left:594px;top:1px;width:118px;height:31px;display:flex;align-items:center;justify-content:center;padding-top:2px;"><div class="t" style="position:relative;text-align:center;line-height:15px">Дата документа</div><svg width="15" height="16" style="position:relative;flex:none;margin-left:5px;top:-2px" shape-rendering="crispEdges"><rect x="3" y="0" width="1" height="1" fill="#0a0a80"/><rect x="2" y="1" width="3" height="1" fill="#0a0a80"/><rect x="2" y="2" width="1" height="1" fill="#0a0a80"/><rect x="4" y="2" width="1" height="1" fill="#0a0a80"/><rect x="1" y="3" width="2" height="1" fill="#0a0a80"/><rect x="4" y="3" width="2" height="1" fill="#0a0a80"/><rect x="1" y="4" width="5" height="1" fill="#0a0a80"/><rect x="0" y="5" width="2" height="1" fill="#0a0a80"/><rect x="5" y="5" width="2" height="1" fill="#0a0a80"/><rect x="0" y="6" width="3" height="1" fill="#0a0a80"/><rect x="4" y="6" width="3" height="1" fill="#0a0a80"/><rect x="1" y="8" width="6" height="1" fill="#7a0000"/><rect x="0" y="9" width="2" height="1" fill="#7a0000"/><rect x="4" y="9" width="2" height="1" fill="#7a0000"/><rect x="0" y="10" width="2" height="1" fill="#7a0000"/><rect x="4" y="10" width="2" height="1" fill="#7a0000"/><rect x="1" y="11" width="5" height="1" fill="#7a0000"/><rect x="2" y="12" width="4" height="1" fill="#7a0000"/><rect x="1" y="13" width="2" height="1" fill="#7a0000"/><rect x="4" y="13" width="2" height="1" fill="#7a0000"/><rect x="0" y="14" width="3" height="1" fill="#7a0000"/><rect x="4" y="14" width="3" height="1" fill="#7a0000"/><rect x="11" y="0" width="1" height="15" fill="#000"/><rect x="9" y="10" width="5" height="2" fill="#000"/><rect x="10" y="12" width="3" height="2" fill="#000"/></svg></div>
<div class="t" style="left:11px;top:38px;width:34px;text-align:right;overflow:hidden;">1</div>
<div class="t" style="left:49px;top:38px;width:424px;text-align:left;overflow:hidden;padding-left:3px;letter-spacing:0.14px">Акт о непредставлении объяснительной работником</div>
<div class="t" style="left:474px;top:38px;width:119px;text-align:left;overflow:hidden;padding-left:3px">А-5</div>
<div class="t" style="left:594px;top:38px;width:118px;text-align:left;overflow:hidden;padding-left:3px">05-06-2016</div>
<div class="t" style="left:11px;top:63px;width:34px;text-align:right;overflow:hidden;">2</div>
<div class="t" style="left:49px;top:63px;width:424px;text-align:left;overflow:hidden;padding-left:3px;letter-spacing:0.14px">Заявление о выдачи дубликата трудовой книжки</div>
<div class="t" style="left:474px;top:63px;width:119px;text-align:left;overflow:hidden;padding-left:3px">З-5</div>
<div class="t" style="left:594px;top:63px;width:118px;text-align:left;overflow:hidden;padding-left:3px">16-06-2016</div>
<div class="t" style="left:11px;top:88px;width:34px;text-align:right;overflow:hidden;">3</div>
<div class="t" style="left:49px;top:88px;width:424px;text-align:left;overflow:hidden;padding-left:3px;letter-spacing:0.14px">Справка с места работы</div>
<div class="t" style="left:474px;top:88px;width:119px;text-align:left;overflow:hidden;padding-left:3px">С-9</div>
<div class="t" style="left:594px;top:88px;width:118px;text-align:left;overflow:hidden;padding-left:3px">20-06-2016</div>
<div class="t" style="left:11px;top:113px;width:34px;text-align:right;overflow:hidden;">4</div>
<div class="t" style="left:49px;top:113px;width:424px;text-align:left;overflow:hidden;padding-left:3px;letter-spacing:0.14px">Уведомление с предложением другой работы и изменений условий труда</div>
<div class="t" style="left:474px;top:113px;width:119px;text-align:left;overflow:hidden;padding-left:3px">У-8</div>
<div class="t" style="left:594px;top:113px;width:118px;text-align:left;overflow:hidden;padding-left:3px">15-07-2016</div>
</div>
</body></html>
